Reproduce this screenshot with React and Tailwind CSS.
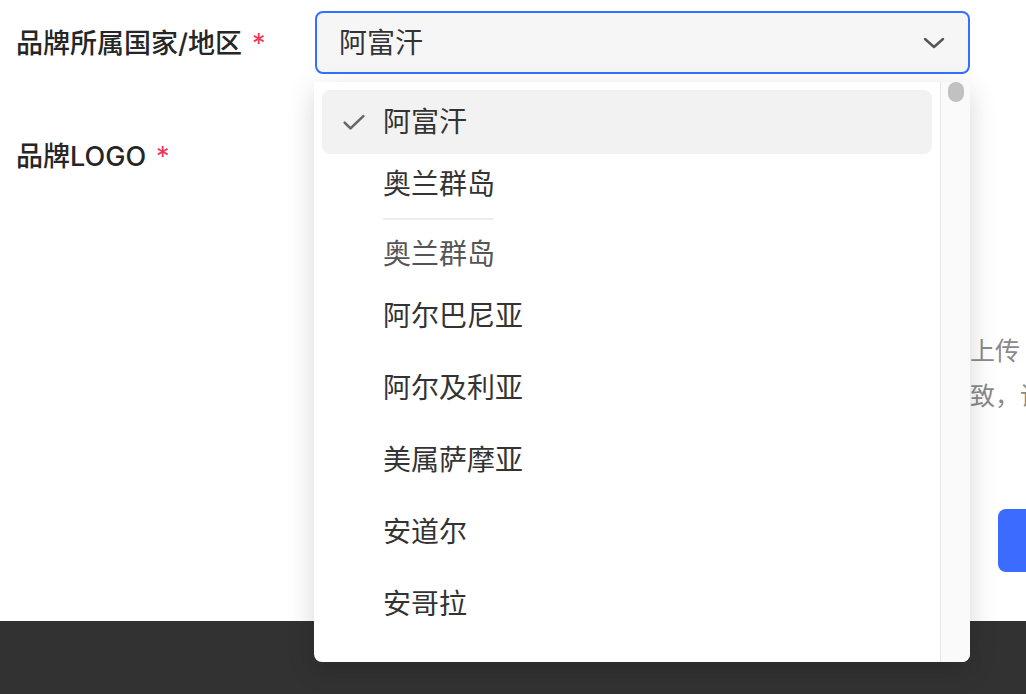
import { useState } from 'react'

const FONT = { fontFamily: 'Inter, "Noto Sans CJK SC", sans-serif' }

const Check = () => (
  <svg className="w-[28px] h-[28px]" viewBox="0 0 24 24" fill="none" stroke="#666" strokeWidth={2.2} strokeLinecap="round" strokeLinejoin="round">
    <path d="M4 12.5l5 5L20 7" />
  </svg>
)

const Chevron = () => (
  <svg className="w-[24px] h-[24px]" viewBox="0 0 24 24" fill="none" stroke="#555" strokeWidth={2.4} strokeLinecap="round" strokeLinejoin="round">
    <path d="M3 8l9 8 9-8" />
  </svg>
)

const Option = ({ label, selected, h }) => (
  <div
    className={`flex items-center rounded-lg ${selected ? 'bg-[#f2f2f2]' : ''}`}
    style={{ height: h }}
  >
    <div className="w-[61px] flex justify-center pl-[2px]">{selected && <Check />}</div>
    <span className="text-[28px] text-[#333] leading-none">{label}</span>
  </div>
)

const App = () => {
  const [value] = useState('阿富汗')
  const countries = ['阿尔及利亚', '美属萨摩亚', '安道尔', '安哥拉']

  return (
    <div className="relative w-[1026px] h-[694px] overflow-hidden bg-white" style={FONT}>
      {/* Form area */}
      <div className="h-[621px] bg-white px-4 pt-[11px]">
        {/* Country row */}
        <div className="flex items-center">
          <div className="w-[299px] pt-[4px] flex items-center text-[27px] font-medium text-[#262626]">
            品牌所属国家/地区
            <span className="ml-[10px] font-normal text-[#f0365a]">*</span>
          </div>
          <div className="w-[655px] h-[63px] flex items-center justify-between rounded-lg border-2 border-[#3370ff] bg-[#f6f6f6] pl-[22px] pr-[22px]">
            <span className="text-[28px] text-[#333]">{value}</span>
            <Chevron />
          </div>
        </div>

        {/* Logo row */}
        <div className="mt-[63px] h-[40px] flex items-center text-[27px] font-medium text-[#262626]">
          品牌LOGO
          <span className="ml-[10px] font-normal text-[#f0365a]">*</span>
        </div>

        {/* Upload hint, mostly hidden under the menu */}
        <div className="ml-[879px] mt-[152px] text-[25px] leading-[45px] text-[#8a8a8a] whitespace-nowrap">
          <p>请点击上传</p>
          <p>名称一致，请确认</p>
        </div>

        <div className="ml-[982px] mt-[90px] w-[200px] h-[63px] rounded-lg bg-[#3b6bff]"></div>
      </div>

      {/* Bottom bar */}
      <div className="h-[73px] bg-[#323232]"></div>

      {/* Dropdown menu */}
      <div className="absolute left-[314px] top-[82px] w-[656px] h-[580px] flex bg-white rounded-b-lg shadow-[0_8px_28px_rgba(0,0,0,0.16)] overflow-hidden">
        <div className="flex-1 pl-2 pr-2 pt-2">
          <Option label="阿富汗" selected h={64} />
          <Option label="奥兰群岛" h={60} />
          <div className="ml-[61px] mt-[4px] w-[111px] h-[2px] bg-[#ededed]"></div>
          <div className="h-[68px] flex items-center pl-[61px] text-[28px] text-[#555] leading-none">奥兰群岛</div>
          <Option label="阿尔巴尼亚" h={56} />
          <div className="mt-2">
            {countries.map((c) => (
              <Option key={c} label={c} h={72} />
            ))}
          </div>
        </div>
        <div className="w-[30px] border-l border-[#e6e6e6] bg-[#fafafa] flex justify-center">
          <div className="w-[16px] h-[20px] rounded-full bg-[#c1c1c1]"></div>
        </div>
      </div>
    </div>
  )
}

export default App
